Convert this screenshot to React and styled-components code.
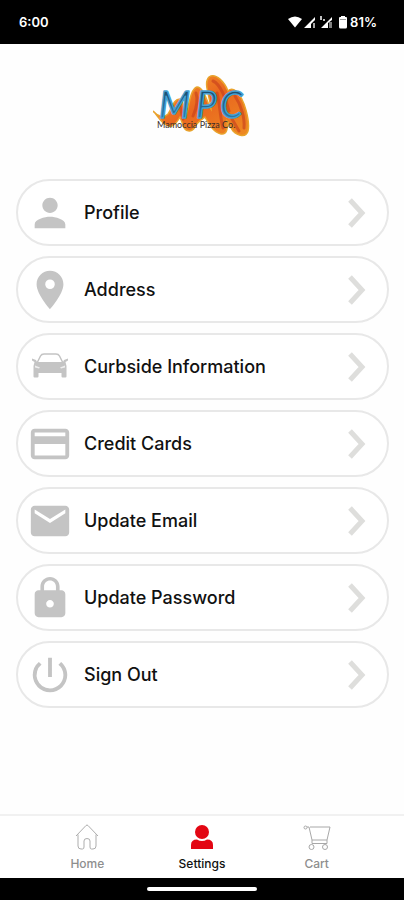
import React from 'react';
import styled, { createGlobalStyle } from 'styled-components';
import {
  MdCreditCard,
  MdEmail,
  MdLocationOn,
  MdLock,
  MdPerson,
  MdPowerSettingsNew,
} from 'react-icons/md';

const GlobalStyle = createGlobalStyle`
  * {
    box-sizing: border-box;
  }

  body {
    margin: 0;
    background: #fefefe;
    font-family: Inter, "Liberation Sans", sans-serif;
    color: #111;
  }
`;

const Screen = styled.div`
  min-height: 100vh;
  display: flex;
  flex-direction: column;
`;

const StatusBar = styled.div`
  height: 44px;
  padding: 0 27px 0 19px;
  display: flex;
  align-items: center;
  justify-content: space-between;
  background: #000;
  color: #fff;
  font-size: 13px;
  font-weight: 600;

  > div {
    display: flex;
    align-items: center;
    gap: 2px;
  }
`;

const Header = styled.header`
  height: 135px;
  padding-top: 30px;
  display: flex;
  justify-content: center;
  align-items: flex-start;
`;

const Menu = styled.ul`
  flex: 1;
  list-style-type: none;
  margin: 0;
  padding: 0 15px 20px 16px;
  display: flex;
  flex-direction: column;
  gap: 10px;
`;

const MenuButton = styled.button`
  width: 100%;
  height: 67px;
  padding: 0 21px 0 9px;
  display: flex;
  align-items: center;
  gap: 11px;
  border: 2px solid #e8e8e8;
  border-radius: 34px;
  background: #fff;
  color: #111;
  font-family: inherit;
  font-size: 18px;
  font-weight: 500;
  text-align: left;
  cursor: pointer;

  > svg {
    flex: none;
    color: #c4c4c4;
  }

  > span {
    flex: 1;
  }
`;

const TabBar = styled.nav`
  height: 64px;
  padding: 0 30px;
  display: flex;
  border-top: 2px solid #f1f1f1;
  background: #fff;
`;

const Tab = styled.a`
  flex: 1;
  padding-top: 7px;
  display: flex;
  flex-direction: column;
  align-items: center;
  gap: 6px;
  color: ${({ $active }) => ($active ? '#111' : '#8e8e8e')};
  font-size: 12px;
  font-weight: 500;
  line-height: 14px;
  text-decoration: none;
`;

const GestureBar = styled.div`
  height: 22px;
  display: flex;
  align-items: center;
  justify-content: center;
  background: #000;

  > div {
    width: 27%;
    height: 4px;
    border-radius: 2px;
    background: #fff;
  }
`;

const StatusIcons = () => (
  <svg width="60" height="14" viewBox="0 0 60 14" fill="#fff" aria-hidden="true">
    <path d="M0 4Q7 -1 14 4L7 12.500Z" />
    <path d="M16 13L27 2V5L23 9V13Z" />
    <path d="M25 8h2v5h-2z" opacity=".65" />
    <path d="M33 13L44 2V5L40 8V13Z" />
    <path d="M32 1h2v4h-2zM35 4h2v2h-2z" opacity=".75" />
    <path d="M41 7h3v6h-3z" opacity=".5" />
    <path d="M53 1h4v1h1q1 0 1 1v9q0 1.500-1.500 1.500h-5q-1.500 0-1.500-1.500V3q0-1 1-1h1z" />
    <path d="M52 4h6v1h-6z" fill="#999" />
  </svg>
);

const Logo = () => (
  <svg width="98" height="64" viewBox="0 0 98 64" role="img" aria-label="MPC">
    <defs>
      <linearGradient id="flame" x1="0" y1="0" x2="1" y2="1">
        <stop offset="0" stopColor="#f6a12d" />
        <stop offset=".5" stopColor="#e9661f" />
        <stop offset="1" stopColor="#ee8b22" />
      </linearGradient>
      <linearGradient id="ink" x1="0" y1="0" x2="0" y2="1">
        <stop offset="0" stopColor="#173f5c" />
        <stop offset="1" stopColor="#2f86ba" />
      </linearGradient>
    </defs>
    <path
      d="M0 37C5 43 11 44 15 40C19 35 20 25 27 25C31 26 31 38 33 42C36 33 37 15 44 13C51 13 54 29 58 35C57 22 50 9 56 3C63-2 72 9 75 17C77 15 79 14 83 17C92 25 97 48 95 57C93 64 85 62 80 57C77 53 76 49 74 47C75 54 74 61 68 60C60 58 56 50 52 43C48 46 44 48 42 53C38 59 32 58 30 51L27 43C22 52 17 54 13 51C7 47 5 42 0 37Z"
      fill="url(#flame)"
      stroke="#e9a32c"
      strokeWidth="1.500"
    />
    <path
      d="M60 7C67 10 73 24 76 37M64 19C67 30 67 43 70 54M82 22C88 31 92 44 91 54M43 19C45 25 44 33 40 42M27 32L30 45M79 45L86 57"
      fill="none"
      stroke="#c9401d"
      strokeWidth="3"
      strokeLinecap="round"
      opacity=".65"
    />
    <text
      x="6 43 67"
      y="44"
      fontFamily="Lato, sans-serif"
      fontStyle="italic"
      fontSize="36"
      fill="url(#ink)"
      stroke="#46a0d2"
      strokeWidth="1.500"
      strokeLinejoin="round"
    >
      MPC
    </text>
    <text x="4" y="54" fontFamily="Lato, sans-serif" fontSize="9" fill="#3a2c28">
      Mamoccia Pizza Co.
    </text>
  </svg>
);

const CarIcon = () => (
  <svg width="46" height="46" viewBox="0 0 46 46" fill="currentColor" aria-hidden="true">
    <path
      d="M10 19L13.500 12Q14.500 10 17 10H29Q31.500 10 32.500 12L36 19"
      fill="none"
      stroke="currentColor"
      strokeWidth="1.500"
    />
    <path d="M5 14.500l4 1.500 1 2h26l1-2 4-1.500v2l-2.500 1.500 1 4v10.500q0 1-1 1h-3q-1 0-1-1v-3.500H11.500v3.500q0 1-1 1H7.500q-1 0-1-1V22l1-4-2.500-1.500z" />
    <path d="M8 21.500l5 2-1 1-4-1zM38 21.500l-5 2 1 1 4-1z" fill="#eee" />
  </svg>
);

const ChevronIcon = () => (
  <svg width="18" height="30" viewBox="0 0 18 30" aria-hidden="true">
    <path d="M2 2L14 15L2 28" fill="none" stroke="#dededc" strokeWidth="5" />
  </svg>
);

const HomeIcon = () => (
  <svg width="28" height="28" viewBox="0 0 28 28" fill="none" stroke="#adadad" aria-hidden="true">
    <path d="M3 13L13 2.500Q14 1.500 15 2.500L25 13M5 11.500V23Q5 26 8 26H9.500Q11 26 11 24V18Q11 15.500 14 15.500T17 18V24Q17 26 18.500 26H20Q23 26 23 23V11.500" />
  </svg>
);

const SettingsIcon = () => (
  <svg width="28" height="28" viewBox="0 0 28 28" fill="#e30613" aria-hidden="true">
    <circle cx="14" cy="9" r="7" />
    <path d="M3 26V22Q3 16.500 9 16.500Q14 19.500 19 16.500Q25 16.500 25 22V26Z" />
  </svg>
);

const CartIcon = () => (
  <svg width="28" height="28" viewBox="0 0 28 28" fill="none" stroke="#a8a8a8" aria-hidden="true">
    <circle cx="2.500" cy="4.500" r="1.500" />
    <path d="M4 4H6L9 17V20.500M7 4H27L24 17H9M9 20.500H24V17" />
    <circle cx="8.500" cy="24" r="2.500" />
    <circle cx="22" cy="24" r="2.500" />
  </svg>
);

const menuItems = [
  { label: 'Profile', icon: MdPerson },
  { label: 'Address', icon: MdLocationOn },
  { label: 'Curbside Information', icon: CarIcon },
  { label: 'Credit Cards', icon: MdCreditCard },
  { label: 'Update Email', icon: MdEmail },
  { label: 'Update Password', icon: MdLock },
  { label: 'Sign Out', icon: MdPowerSettingsNew },
];

const tabs = [
  { label: 'Home', icon: HomeIcon },
  { label: 'Settings', icon: SettingsIcon, active: true },
  { label: 'Cart', icon: CartIcon },
];

const App = () => {
  return (
    <Screen>
      <GlobalStyle />
      <StatusBar>
        <span>6:00</span>
        <div>
          <StatusIcons />
          <span>81%</span>
        </div>
      </StatusBar>
      <Header>
        <Logo />
      </Header>
      <Menu>
        {menuItems.map(({ label, icon: Icon }) => (
          <li key={label}>
            <MenuButton type="button">
              <Icon size={46} />
              <span>{label}</span>
              <ChevronIcon />
            </MenuButton>
          </li>
        ))}
      </Menu>
      <TabBar>
        {tabs.map(({ label, icon: Icon, active }) => (
          <Tab
            key={label}
            href={`#${label.toLowerCase()}`}
            $active={active}
            aria-current={active ? 'page' : undefined}
          >
            <Icon />
            {label}
          </Tab>
        ))}
      </TabBar>
      <GestureBar>
        <div />
      </GestureBar>
    </Screen>
  );
};

export default App;
